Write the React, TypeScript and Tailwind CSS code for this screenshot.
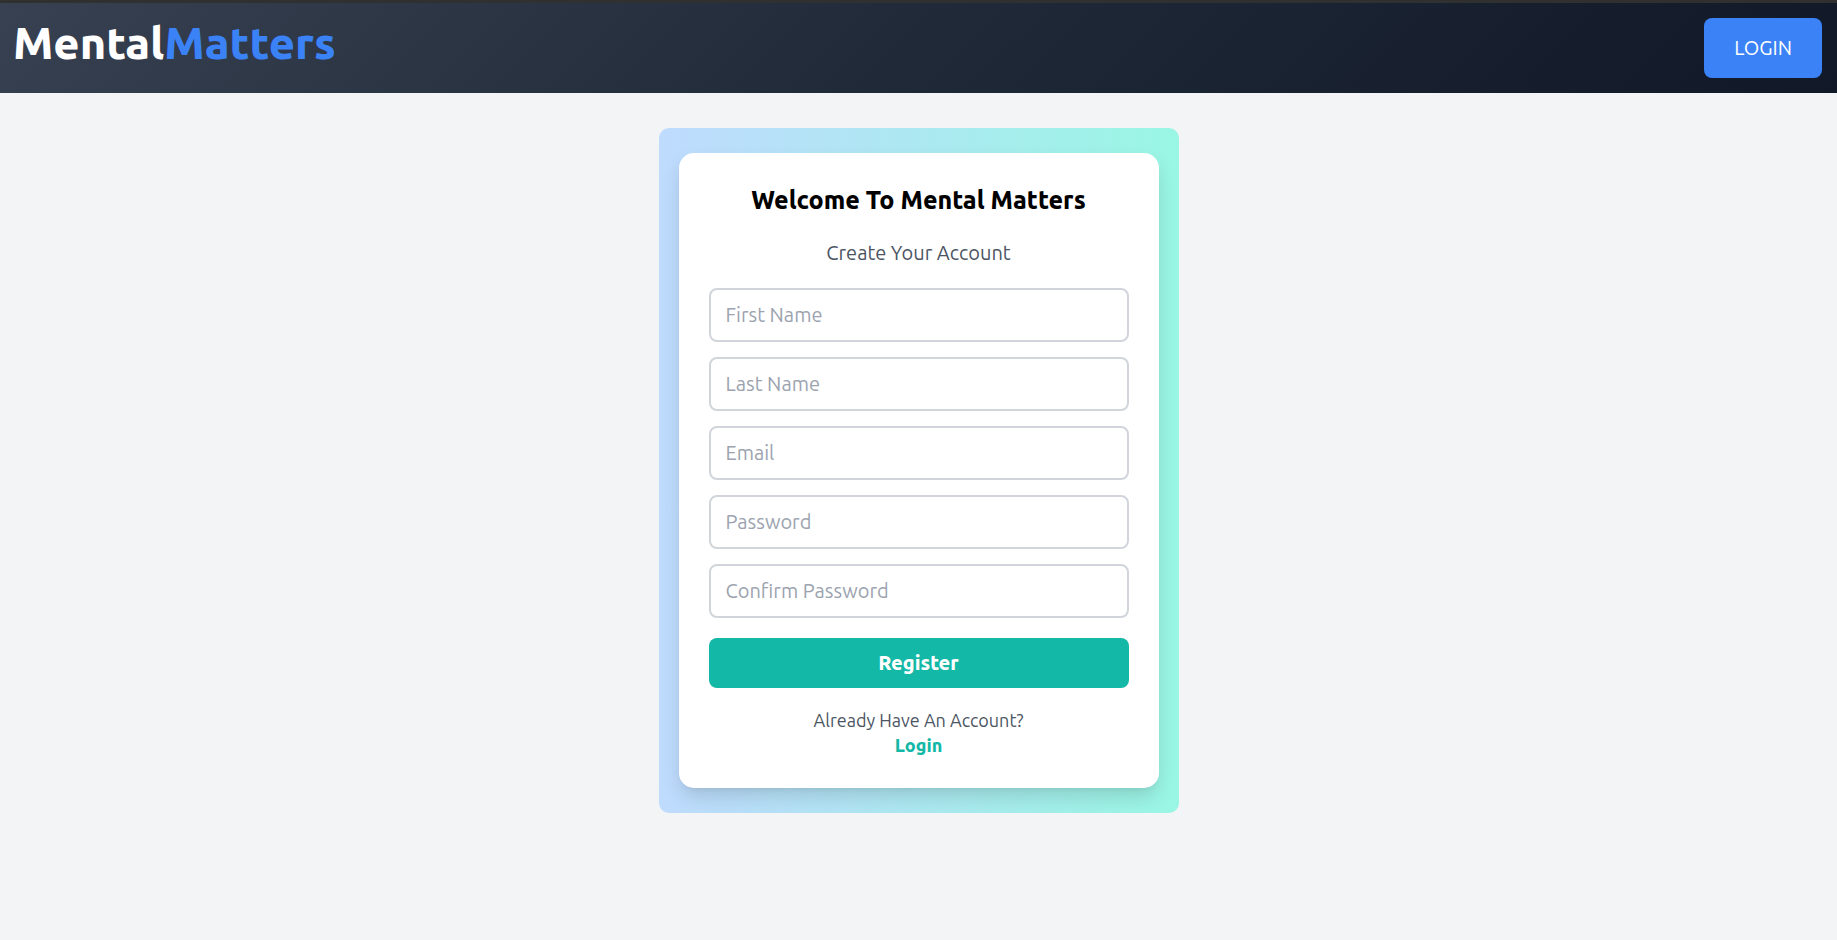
const fields = [
  { id: "firstName", label: "First Name", type: "text", autoComplete: "given-name" },
  { id: "lastName", label: "Last Name", type: "text", autoComplete: "family-name" },
  { id: "email", label: "Email", type: "email", autoComplete: "email" },
  { id: "password", label: "Password", type: "password", autoComplete: "new-password" },
  { id: "confirmPassword", label: "Confirm Password", type: "password", autoComplete: "new-password" },
];

function Navbar() {
  return (
    <header className="flex items-start justify-between border-t-3 border-[#303030] bg-linear-135/srgb from-[#374151] via-[#1f2937] to-[#111827] py-[15px] pr-[15px] pl-[13px]">
      <a href="#home" className="text-[45px] leading-[50px] font-extrabold text-white">
        Mental<span className="text-[#3b82f6]">Matters</span>
      </a>
      <button type="button" className="h-[60px] rounded-lg bg-[#3b82f6] px-[30px] text-[20px] text-white">
        LOGIN
      </button>
    </header>
  );
}

function RegisterForm() {
  return (
    <section className="w-full max-w-[520px] rounded-[10px] bg-linear-to-r/srgb from-[#bfdbfe] to-[#99f6e4] px-5 py-[25px]">
      <div className="rounded-[15px] bg-white p-[30px] text-center shadow-[0_10px_20px_-2px_rgba(0,0,0,0.14),0_4px_7px_-5px_rgba(0,0,0,0.1)]">
        <h1 className="text-[25px] leading-[35px] font-extrabold text-black">Welcome To Mental Matters</h1>
        <p className="mt-5 text-[20px] leading-[30px] text-[#4b5563]">Create Your Account</p>
        <form className="mt-5 flex flex-col gap-[15px]" onSubmit={(e) => e.preventDefault()}>
          {fields.map((f) => (
            <input
              key={f.id}
              id={f.id}
              type={f.type}
              aria-label={f.label}
              placeholder={f.label}
              autoComplete={f.autoComplete}
              className="block h-[54px] w-full rounded-lg border-2 border-[#d1d5db] bg-white px-[15px] pb-[2px] text-[20px] placeholder:text-[#9ca3af]"
            />
          ))}
          <button type="submit" className="mt-[5px] h-[50px] rounded-lg bg-[#14b8a6] text-[20px] font-extrabold text-white">
            Register
          </button>
        </form>
        <p className="mt-5 text-[18px] leading-[25px] text-[#4b5563]">
          Already Have An Account?
          <a href="#login" className="block font-extrabold text-[#14b8a6]">
            Login
          </a>
        </p>
      </div>
    </section>
  );
}

export default function App() {
  return (
    <div className="min-h-screen bg-[#f3f4f6] font-['Ubuntu','Noto_Sans',sans-serif]">
      <Navbar />
      <main className="flex justify-center py-[35px]">
        <RegisterForm />
      </main>
    </div>
  );
}
